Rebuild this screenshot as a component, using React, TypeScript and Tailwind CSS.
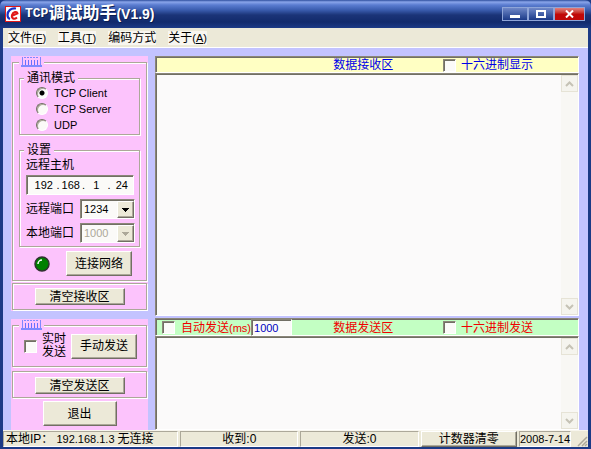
import type { ReactNode } from "react";

const raised =
  "border border-t-white border-l-white border-r-[#716f64] border-b-[#716f64] bg-[#ece9d8] shadow-[inset_-1px_-1px_0_#aca899]";
const sunken =
  "border border-t-[#8a8678] border-l-[#8a8678] border-r-white border-b-white shadow-[inset_1px_1px_0_#716f64]";
const groove = "border border-[#aca899] shadow-[1px_1px_0_#fff,inset_1px_1px_0_#fff]";

function PushButton({ children, className = "" }: { children: ReactNode; className?: string }) {
  return (
    <button type="button" className={`${raised} flex items-center justify-center ${className}`}>
      {children}
    </button>
  );
}

function Checkbox({ id }: { id: string }) {
  return (
    <input
      id={id}
      type="checkbox"
      className={`${sunken} size-[13px] shrink-0 appearance-none bg-[#fbfaf8] checked:bg-[#716f64]`}
    />
  );
}

function Grip() {
  return (
    <svg width="21" height="12" viewBox="0 0 21 12" className="block" shapeRendering="crispEdges">
      <path d="M1.5 1v9M19.5 1v9" stroke="#7f88ff" strokeWidth="1" />
      <path d="M0 10h21" stroke="#8088ff" strokeWidth="2" />
      <path d="M4.5 4v5M7.5 4v5M10.5 4v5M13.5 4v5M16.5 4v5" stroke="#6870ff" />
      <path d="M3 1.5h15" stroke="#7f88ff" strokeDasharray="2 1" />
    </svg>
  );
}

function Radio({ label, checked }: { label: string; checked?: boolean }) {
  return (
    <label className="flex h-4 items-center gap-[6px] text-[11px]">
      <input
        type="radio"
        name="mode"
        defaultChecked={checked}
        className="size-3 appearance-none rounded-full border border-t-[#716f64] border-l-[#716f64] border-r-white border-b-white bg-[#fbfaf8] shadow-[inset_1px_1px_0_#aca899] checked:bg-[radial-gradient(circle,#000_2px,#fbfaf8_3px)]"
      />
      {label}
    </label>
  );
}

function PortSelect({ id, value, disabled }: { id: string; value: string; disabled?: boolean }) {
  return (
    <div className={`${sunken} relative h-5 w-[55px] bg-[#fbfaf8]`}>
      <select
        id={id}
        disabled={disabled}
        className="block h-full w-full appearance-none pl-[3px] text-[11px] disabled:text-[#aca899] disabled:opacity-100"
      >
        <option>{value}</option>
      </select>
      <span className={`${raised} pointer-events-none absolute top-px right-0 bottom-0 flex w-[17px] items-center justify-center`}>
        <svg width="7" height="4" viewBox="0 0 7 4" shapeRendering="crispEdges">
          <path d="M0 0h7L3.5 4z" fill={disabled ? "#aca899" : "#000"} />
        </svg>
      </span>
    </div>
  );
}

function ScrollArrow({ up }: { up?: boolean }) {
  return (
    <button
      type="button"
      aria-label={up ? "向上滚动" : "向下滚动"}
      className="flex size-[17px] items-center justify-center border border-[#e6e3d6] bg-[#f5f4ee]"
    >
      <svg width="9" height="6" viewBox="0 0 9 6">
        <path d={up ? "M1 5l3.5-3.5L8 5" : "M1 1l3.5 3.5L8 1"} fill="none" stroke="#c5c2b5" strokeWidth="2" />
      </svg>
    </button>
  );
}

function TextPane({ label, className }: { label: string; className: string }) {
  return (
    <div className={`${sunken} flex bg-[#fbfafa] pt-px ${className}`}>
      <textarea aria-label={label} className="min-w-0 flex-1 resize-none p-1 outline-none" />
      <div className="flex w-[17px] flex-col justify-between bg-[#f8f7f4]">
        <ScrollArrow up />
        <ScrollArrow />
      </div>
    </div>
  );
}

function MenuItem({ text, hotkey }: { text: string; hotkey?: string }) {
  return (
    <button type="button" className="h-[14px] bg-[#f8f6f0] leading-[14px]">
      {text}
      {hotkey && (
        <span className="text-[11px]">
          (<u>{hotkey}</u>)
        </span>
      )}
    </button>
  );
}

function TitleBar() {
  const button = "flex h-[14px] items-center justify-center border border-[#8fa5d8]";
  return (
    <header className="flex h-7 items-center justify-between rounded-t-md bg-[linear-gradient(#2f4f9e_0,#8aa5ea_2px,#5a7cd0_5px,#3a5cae_10px,#1b3478_15px,#122a6c_22px,#1c3a86_28px)] pr-[6px] pl-[5px]">
      <div className="flex items-center gap-1">
        <svg width="16" height="16" viewBox="0 0 16 16">
          <rect x=".5" y=".5" width="15" height="15" fill="#fff" stroke="#e01818" />
          <path d="M11 2.500C6 1.500 2.500 5 2.500 9c0 2 1 3.500 2.500 4" fill="none" stroke="#1830c8" strokeWidth="2.200" />
          <path d="M6.500 10l6-2.500C12 5 8 5.500 7 9c-.8 3.500 2 5 5 2.500" fill="none" stroke="#e01818" strokeWidth="2" />
        </svg>
        <h1 className="flex items-center text-sm font-bold text-white [text-shadow:1px_1px_0_#0a1c50]">
          <span className="font-['Liberation_Mono',monospace] text-[13px]">TCP</span>
          <span className="text-[17px] leading-5">调试助手</span>(V1.9)
        </h1>
      </div>
      <div className="flex">
        <button type="button" aria-label="最小化" className={`${button} w-[26px] bg-linear-to-b from-[#7088c8] to-[#1c3a88]`}>
          <span className="mt-1 h-[3px] w-[10px] bg-white" />
        </button>
        <button type="button" aria-label="最大化" className={`${button} w-[26px] bg-linear-to-b from-[#7088c8] to-[#1c3a88]`}>
          <span className="h-[8px] w-[10px] border-2 border-white" />
        </button>
        <button type="button" aria-label="关闭" className={`${button} w-[31px] bg-linear-to-b from-[#e08080] to-[#c00808] to-50%`}>
          <svg width="9" height="8" viewBox="0 0 9 8">
            <path d="M1 .5l7 7M8 .5l-7 7" stroke="#fff" strokeWidth="2" />
          </svg>
        </button>
      </div>
    </header>
  );
}

function ReceiveControls() {
  return (
    <section className="bg-[#fcc3fc] px-px pb-px">
      <fieldset className={`${groove} px-[6px] pb-1`}>
        <legend className="bg-[#fcc3fc] px-[2px]">
          <Grip />
        </legend>
        <fieldset className={`${groove} mt-[3px] pb-px pl-4`}>
          <legend className="-ml-3 bg-[#fcc3fc] px-[3px] leading-[14px]">通讯模式</legend>
          <Radio label="TCP Client" checked />
          <Radio label="TCP Server" />
          <Radio label="UDP" />
        </fieldset>
        <fieldset className={`${groove} mt-2 pr-1 pb-[3px] pl-[6px]`}>
          <legend className="-ml-[2px] bg-[#fcc3fc] px-[3px] leading-[14px]">设置</legend>
          <div className="h-[18px] leading-4">远程主机</div>
          <div role="group" aria-label="远程主机" className={`${sunken} mr-px flex h-5 items-center bg-[#fbfaf8] pl-1 text-[11px]`}>
            {["192", "168", "1", "24"].map((octet, i) => (
              <div key={i} className="flex min-w-0 flex-1 items-center">
                {i > 0 && <span>.</span>}
                <input aria-label={`第${i + 1}段`} defaultValue={octet} className="w-full min-w-0 text-center outline-none" />
              </div>
            ))}
          </div>
          <div className="mt-1 flex items-center justify-between">
            <label htmlFor="remote-port">远程端口</label>
            <PortSelect id="remote-port" value="1234" />
          </div>
          <div className="mt-1 flex items-center justify-between">
            <label htmlFor="local-port">本地端口</label>
            <PortSelect id="local-port" value="1000" disabled />
          </div>
        </fieldset>
        <div className="mt-1 flex items-center justify-between pr-2 pl-[15px]">
          <svg width="16" height="16" viewBox="0 0 16 16">
            <circle cx="8" cy="8" r="7" fill="#008000" stroke="#303030" strokeWidth="1.500" />
            <path d="M4 8a4 4 0 0 1 4-4" fill="none" stroke="#fff" strokeWidth="1.500" />
          </svg>
          <PushButton className="h-[25px] w-[66px]">连接网络</PushButton>
        </div>
      </fieldset>
      <div className={`${groove} mt-[2px] flex justify-center py-1`}>
        <PushButton className="h-[17px] w-[90px]">清空接收区</PushButton>
      </div>
    </section>
  );
}

function SendControls() {
  return (
    <section className="flex-1 bg-[#fcc3fc] px-px">
      <fieldset className={`${groove} pb-[7px]`}>
        <legend className="ml-[6px] bg-[#fcc3fc] px-[2px]">
          <Grip />
        </legend>
        <div className="mt-[2px] flex items-center justify-between pr-[9px] pl-[11px]">
          <label htmlFor="realtime" className="flex items-center gap-[5px] leading-[13px]">
            <Checkbox id="realtime" />
            <span className="w-6">实时发送</span>
          </label>
          <PushButton className="h-[25px] w-[66px]">手动发送</PushButton>
        </div>
      </fieldset>
      <div className={`${groove} mt-1 flex justify-center pt-[5px] pb-[3px]`}>
        <PushButton className="h-[17px] w-[90px]">清空发送区</PushButton>
      </div>
      <PushButton className="mx-auto mt-[3px] h-[25px] w-[74px]">退出</PushButton>
    </section>
  );
}

function StatusBar() {
  const pane = "flex h-4 items-center border border-t-[#aca899] border-l-[#aca899] border-r-white border-b-white";
  return (
    <footer className="flex items-center gap-[2px] border-t border-[#f8f6ee] bg-[#ece9d8]">
      <div className={`${pane} flex-[174] pl-[2px] whitespace-pre`}>
        本地IP：<span className="text-[11px]"> 192.168.1.3 </span>无连接
      </div>
      <div className={`${pane} flex-[118] justify-center`}>收到:0</div>
      <div className={`${pane} flex-[118] justify-center`}>发送:0</div>
      <PushButton className="h-4 flex-[96]">计数器清零</PushButton>
      <div className={`${pane} w-[52px] justify-center text-[11px] whitespace-nowrap`}>2008-7-14</div>
      <svg width="15" height="14" viewBox="0 0 15 14" className="self-end">
        <path d="M5 13l9-9M9 13l5-5M12 13l2-2" stroke="#aca899" strokeWidth="1.500" />
      </svg>
    </footer>
  );
}

export default function App() {
  const header = `${sunken} grid grid-cols-[42%_26%_1fr] items-center`;
  return (
    <div className="flex min-h-screen flex-col bg-[#1c3a86] font-['Liberation_Sans','Noto_Sans_CJK_SC',sans-serif] text-xs text-black">
      <TitleBar />
      <div className="mx-[3px] mb-[2px] flex flex-1 flex-col bg-[#c3c3ff]">
        <nav className="flex h-5 items-center gap-3 border-b border-white bg-[#ece9d8] pl-[5px]">
          <MenuItem text="文件" hotkey="F" />
          <MenuItem text="工具" hotkey="T" />
          <MenuItem text="编码方式" />
          <MenuItem text="关于" hotkey="A" />
        </nav>
        <main className="flex flex-1 gap-[7px] pt-2 pr-[9px] pl-2">
          <div className="flex w-[137px] shrink-0 flex-col gap-2">
            <ReceiveControls />
            <SendControls />
          </div>
          <div className="flex min-w-0 flex-1 flex-col">
            <div className={`${header} h-[17px] bg-[#ffffc3] text-[#0000e8]`}>
              <h2 className="col-start-2">数据接收区</h2>
              <label htmlFor="hex-show" className="flex items-center gap-[5px]">
                <Checkbox id="hex-show" />
                十六进制显示
              </label>
            </div>
            <TextPane label="数据接收区" className="flex-1" />
            <div className={`${header} mt-[2px] h-[18px] bg-[#c3ffc3] text-[#f00000]`}>
              <div className="flex items-center">
                <label htmlFor="auto-send" className="flex flex-1 items-center gap-[6px] pl-[6px] whitespace-nowrap">
                  <Checkbox id="auto-send" />
                  <span>
                    自动发送<span className="text-[11px]">(ms)</span>
                  </span>
                </label>
                <input
                  aria-label="间隔(ms)"
                  defaultValue="1000"
                  className={`${sunken} mr-[42px] h-[17px] w-[41px] bg-[#fbfaf8] pl-[2px] text-[11px] text-[#0000c0]`}
                />
              </div>
              <h2>数据发送区</h2>
              <label htmlFor="hex-send" className="flex items-center gap-[5px]">
                <Checkbox id="hex-send" />
                十六进制发送
              </label>
            </div>
            <TextPane label="数据发送区" className="h-[94px]" />
          </div>
        </main>
        <StatusBar />
      </div>
    </div>
  );
}
